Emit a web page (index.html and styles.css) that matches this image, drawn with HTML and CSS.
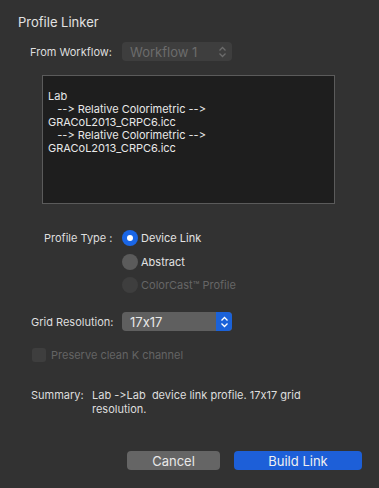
FILE: index.html
```html
<!DOCTYPE html>
<html lang="en">
<head>
  <meta charset="UTF-8" />
  <title>Profile Linker</title>
  <link rel="stylesheet" href="styles.css">
</head>
<body>

<div class="dialog">
  <div class="title">Profile Linker</div>

  <div class="form-row workflow-row">
    <span class="label">From Workflow:</span>
    <div class="popup disabled">
      <span>Workflow 1</span>
      <svg class="arrows" width="9" height="12" viewBox="0 0 9 12"><path d="M1.5 4.5 L4.5 1.5 L7.5 4.5 M1.5 7.5 L4.5 10.5 L7.5 7.5" fill="none" stroke="currentColor" stroke-width="1.3"/></svg>
    </div>
  </div>

  <div class="chain-box">
    <div>Lab</div>
    <div>&nbsp;&nbsp;&nbsp;--&gt; Relative Colorimetric --&gt;</div>
    <div>GRACoL2013_CRPC6.icc</div>
    <div>&nbsp;&nbsp;&nbsp;--&gt; Relative Colorimetric --&gt;</div>
    <div>GRACoL2013_CRPC6.icc</div>
  </div>

  <div class="form-row type-row">
    <span class="label">Profile Type :</span>
    <div class="radios">
      <div class="radio checked"><span class="dot"></span>Device Link</div>
      <div class="radio"><span class="dot"></span>Abstract</div>
      <div class="radio disabled"><span class="dot"></span>ColorCast™ Profile</div>
    </div>
  </div>

  <div class="form-row grid-row">
    <span class="label">Grid Resolution:</span>
    <div class="popup active">
      <span>17x17</span>
      <span class="stepper">
        <svg width="9" height="12" viewBox="0 0 9 12"><path d="M1.5 4.5 L4.5 1.5 L7.5 4.5 M1.5 7.5 L4.5 10.5 L7.5 7.5" fill="none" stroke="white" stroke-width="1.3"/></svg>
      </span>
    </div>
  </div>

  <div class="check-row">
    <span class="checkbox"></span>Preserve clean K channel
  </div>

  <div class="summary">
    <span class="summary-label">Summary:</span>
    <span class="summary-text">Lab -&gt;Lab&nbsp; device link profile. 17x17 grid resolution.</span>
  </div>

  <div class="buttons">
    <button class="btn cancel">Cancel</button>
    <button class="btn primary">Build Link</button>
  </div>
</div>

</body>
</html>
```

FILE: styles.css
```css
body {
  margin: 0;
  padding: 0;
  background: #323232;
  font-family: Inter, "Liberation Sans", sans-serif;
  font-feature-settings: "liga" 0, "calt" 0;
  color: #dedede;
  font-size: 11px;
}
.dialog {
  width: 379px;
  height: 488px;
  padding-top: 14px;
  box-sizing: border-box;
}
.title {
  padding-left: 18px;
  font-size: 13px;
  line-height: 16px;
  color: #e2e2e2;
}

/* label column is 113px wide, controls start at 122px */
.form-row {
  display: grid;
  grid-template-columns: 113px auto;
  column-gap: 9px;
  align-items: center;
}
.form-row .label {
  white-space: nowrap;
}
.workflow-row { margin-top: 12px; }
.workflow-row .label { padding-left: 30px; }
.type-row { margin-top: 26px; align-items: start; }
.type-row .label { line-height: 16px; padding-left: 44px; }
.grid-row { margin-top: 19px; }
.grid-row .label { padding-left: 31px; }

.popup {
  height: 19px;
  width: 110px;
  box-sizing: border-box;
  border-radius: 4px;
  display: flex;
  align-items: center;
  justify-content: space-between;
  font-size: 13px;
  padding-left: 8px;
}
.popup.disabled {
  background: #3e3e3e;
  color: #6c6c6c;
  padding-right: 5px;
}
.popup.active {
  background: #5f5f5f;
  color: #e8e8e8;
  overflow: hidden;
}
.stepper {
  width: 16px;
  height: 19px;
  background: #1b62d9;
  display: flex;
  align-items: center;
  justify-content: center;
}

.chain-box {
  margin: 14px 0 0 42px;
  width: 293px;
  height: 129px;
  box-sizing: border-box;
  background: #1e1e1e;
  border: 1px solid #5b5b5b;
  padding: 14px 5px;
  line-height: 13px;
  color: #e8e8e8;
}

.radios {
  display: flex;
  flex-direction: column;
  gap: 7.5px;
}
.radio {
  display: flex;
  align-items: center;
  gap: 3px;
  line-height: 16px;
  color: #e2e2e2;
}
.radio .dot {
  width: 16px;
  height: 16px;
  border-radius: 50%;
  background: #5b5b5b;
  display: flex;
  align-items: center;
  justify-content: center;
}
.radio.checked .dot {
  background: #1a66e6;
}
.radio.checked .dot::after {
  content: "";
  width: 6px;
  height: 6px;
  border-radius: 50%;
  background: white;
}
.radio.disabled { color: #666; }
.radio.disabled .dot { background: #3e3e3e; }

.check-row {
  margin: 17px 0 0 32px;
  display: flex;
  align-items: center;
  gap: 5px;
  color: #646464;
  line-height: 14px;
}
.checkbox {
  width: 14px;
  height: 14px;
  border-radius: 3px;
  background: #3e3e3e;
}

.summary {
  margin: 26px 0 0 31px;
  display: flex;
  line-height: 14px;
}
.summary-label { width: 61px; flex-shrink: 0; }
.summary-text { width: 215px; }

.buttons {
  margin: 35px 17px 0 0;
  display: flex;
  justify-content: flex-end;
  gap: 14px;
}
.btn {
  height: 19px;
  border: none;
  border-radius: 4px;
  font-family: Inter, "Liberation Sans", sans-serif;
  font-size: 13px;
  color: #e8e8e8;
  padding: 0;
}
.btn.cancel { width: 93px; background: #656565; }
.btn.primary { width: 128px; background: #1d5fd8; color: #f0f0f0; }
```
